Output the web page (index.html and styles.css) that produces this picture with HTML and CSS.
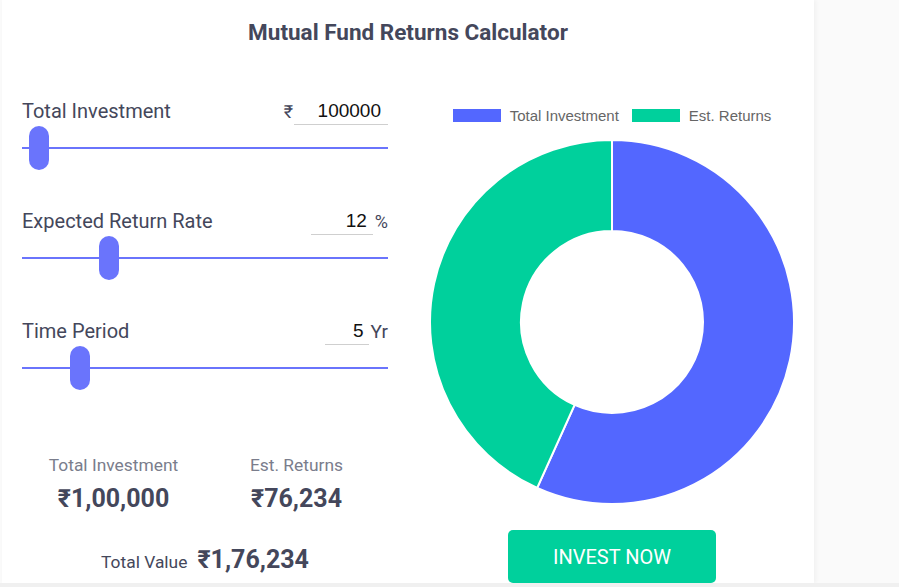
FILE: index.html
```html
<!DOCTYPE html>
<html lang="en">
<head>
<meta charset="utf-8">
<title>Mutual Fund Returns Calculator</title>
<link rel="stylesheet" href="styles.css">
</head>
<body>
<div class="page">
  <div class="card">
    <h1 class="title">Mutual Fund Returns Calculator</h1>
    <div class="content">
      <div class="calc">
        <div class="field">
          <div class="field-head">
            <span class="field-label">Total Investment</span>
            <span class="field-value">
              <span class="prefix">₹</span>
              <input class="num num-amount" type="text" value="100000">
            </span>
          </div>
          <div class="slider">
            <div class="track"></div>
            <div class="thumb" style="left:7px"></div>
          </div>
        </div>

        <div class="field">
          <div class="field-head">
            <span class="field-label">Expected Return Rate</span>
            <span class="field-value">
              <input class="num num-rate" type="text" value="12">
              <span class="suffix suffix-small">%</span>
            </span>
          </div>
          <div class="slider">
            <div class="track"></div>
            <div class="thumb" style="left:77px"></div>
          </div>
        </div>

        <div class="field">
          <div class="field-head">
            <span class="field-label">Time Period</span>
            <span class="field-value">
              <input class="num num-years" type="text" value="5">
              <span class="suffix">Yr</span>
            </span>
          </div>
          <div class="slider">
            <div class="track"></div>
            <div class="thumb" style="left:48px"></div>
          </div>
        </div>

        <div class="summary">
          <div class="summary-item">
            <div class="summary-label">Total Investment</div>
            <div class="summary-value">₹1,00,000</div>
          </div>
          <div class="summary-item">
            <div class="summary-label">Est. Returns</div>
            <div class="summary-value">₹76,234</div>
          </div>
        </div>

        <div class="total">
          <span class="total-label">Total Value</span>
          <span class="total-value">₹1,76,234</span>
        </div>
      </div>

      <div class="chart-col">
        <div class="legend">
          <span class="legend-item"><span class="legend-box box-invest"></span>Total Investment</span>
          <span class="legend-item"><span class="legend-box box-returns"></span>Est. Returns</span>
        </div>
        <svg class="donut" width="366" height="366" viewBox="-1 -1 366 366">
          <path class="slice-invest" d="M182 0 A182 182 0 1 1 107.18 347.91 L144.59 264.96 A91 91 0 1 0 182 91 Z"/>
          <path class="slice-returns" d="M107.18 347.91 A182 182 0 0 1 182 0 L182 91 A91 91 0 0 0 144.59 264.96 Z"/>
        </svg>
        <button class="invest-btn" type="button">INVEST NOW</button>
      </div>
    </div>
  </div>
</div>
</body>
</html>
```

FILE: styles.css
```css
* {
  box-sizing: border-box;
}

html, body {
  margin: 0;
  padding: 0;
}

body {
  background: #f0f0f0;
  font-family: Roboto, "Noto Sans", Arial, sans-serif;
  color: #44475b;
}

.page {
  height: 583px;
  background: #fafafa;
  display: flex;
}

.card {
  margin-left: 2px;
  width: 812px;
  height: 583px;
  background: #ffffff;
  box-shadow: 2px 0 4px rgba(0, 0, 0, 0.04);
  padding: 17px 20px 0 20px;
}

.title {
  margin: 0;
  text-align: center;
  font-size: 22.5px;
  line-height: 30px;
  font-weight: 700;
  color: #44475b;
}

.content {
  display: flex;
  align-items: flex-start;
  gap: 42px;
  margin-top: 50px;
}

.calc {
  width: 366px;
  display: flex;
  flex-direction: column;
}

.field {
  margin-bottom: 37px;
}

.field-head {
  display: flex;
  justify-content: space-between;
  align-items: center;
  height: 28px;
  margin-bottom: 1px;
}

.field-label {
  font-size: 20px;
  line-height: 28px;
  color: #44475b;
}

.field-value {
  display: flex;
  align-items: center;
  height: 28px;
}

.prefix {
  font-size: 18px;
  color: #44475b;
  margin-right: 1px;
}

.num {
  border: none;
  border-bottom: 1px solid #cfcfcf;
  outline: none;
  background: transparent;
  font-family: "Liberation Sans", Arial, sans-serif;
  font-size: 19px;
  color: #111;
  text-align: right;
  height: 28px;
  padding: 0;
  margin: 0;
}

.num-amount {
  width: 94px;
  padding-right: 7px;
}

.num-rate {
  width: 62px;
  padding-right: 6px;
}

.num-years {
  width: 44px;
  padding-right: 5px;
}

.suffix {
  font-size: 19px;
  margin-left: 2px;
  color: #44475b;
}

.suffix-small {
  font-size: 18px;
}

.slider {
  position: relative;
  height: 44px;
  display: flex;
  align-items: center;
}

.track {
  flex: 1;
  height: 2px;
  background: #6a74fc;
}

.thumb {
  position: absolute;
  top: 0;
  width: 20px;
  height: 44px;
  border-radius: 10px;
  background: #6a74fc;
}

.summary {
  display: grid;
  grid-template-columns: 1fr 1fr;
  margin-top: 27px;
  text-align: center;
}

.summary-label {
  font-size: 17.4px;
  line-height: 22px;
  color: #7a7d8c;
}

.summary-value {
  margin-top: 8px;
  font-size: 25px;
  line-height: 30px;
  font-weight: 700;
  color: #44475b;
}

.total {
  display: flex;
  justify-content: center;
  align-items: baseline;
  gap: 10px;
  margin-top: 31px;
}

.total-label {
  font-size: 17.4px;
  color: #44475b;
}

.total-value {
  font-size: 25px;
  line-height: 30px;
  font-weight: 700;
  color: #44475b;
}

.chart-col {
  width: 364px;
  display: flex;
  flex-direction: column;
  align-items: center;
  padding-top: 8px;
}

.legend {
  display: flex;
  gap: 13px;
  height: 20px;
  align-items: center;
  font-family: "Liberation Sans", Arial, sans-serif;
  font-size: 15px;
  color: #666666;
}

.legend-item {
  display: flex;
  align-items: center;
  gap: 9px;
}

.legend-box {
  width: 48px;
  height: 13px;
}

.box-invest {
  background: #5367ff;
}

.box-returns {
  background: #00d09c;
}

.donut {
  margin-top: 14px;
  display: block;
}

.slice-invest {
  fill: #5367ff;
  stroke: #ffffff;
  stroke-width: 2;
}

.slice-returns {
  fill: #00d09c;
  stroke: #ffffff;
  stroke-width: 2;
}

.invest-btn {
  margin-top: 25px;
  width: 208px;
  height: 53px;
  border: none;
  border-radius: 5px;
  background: #00d09c;
  color: #ffffff;
  font-family: Roboto, Arial, sans-serif;
  font-size: 20px;
  letter-spacing: 0;
}
```
